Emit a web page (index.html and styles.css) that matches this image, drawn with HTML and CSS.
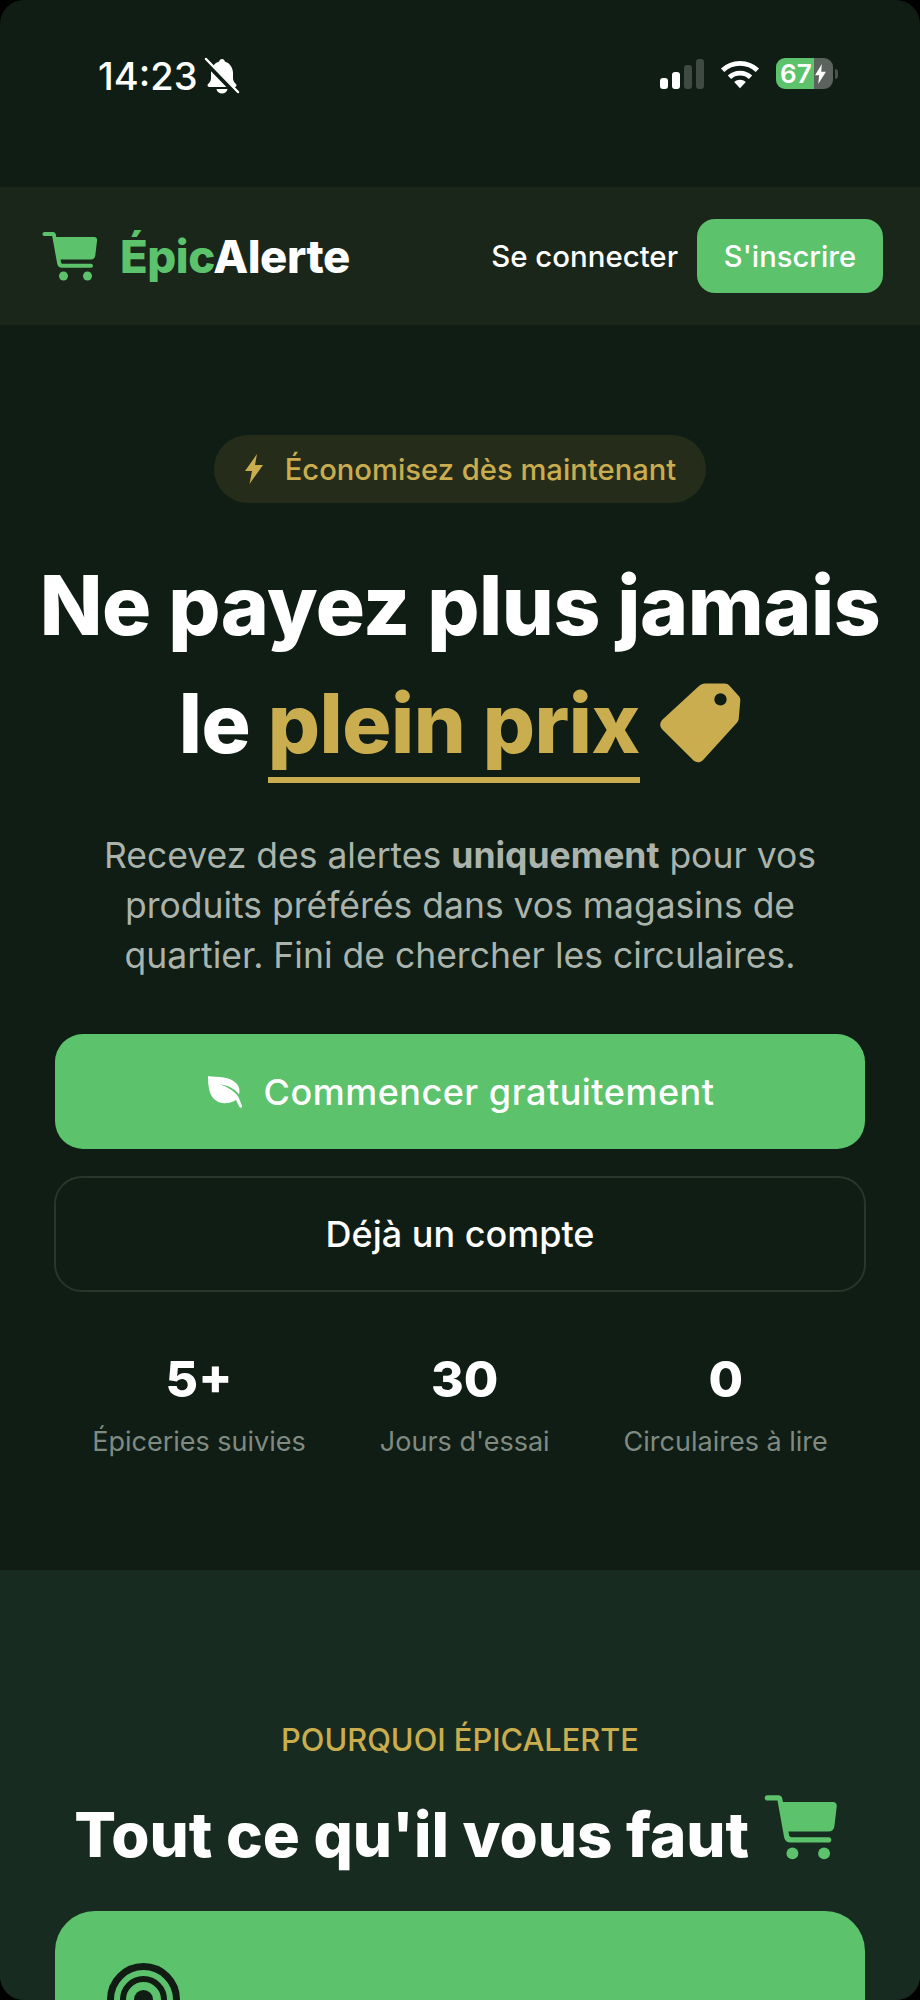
FILE: index.html
```html
<!DOCTYPE html>
<html lang="fr">

<head>
    <meta charset="UTF-8">
    <meta name="viewport" content="width=device-width, initial-scale=1.0">
    <title>ÉpicAlerte</title>
    <link rel="stylesheet" href="styles.css">
</head>

<body>
    <div class="screen">
        <!-- Status bar -->
        <div class="status-bar">
            <div class="status-left">
                <span class="status-time">14:23</span>
                <svg class="bell-icon" viewBox="0 0 36 36">
                    <path fill="#fff" d="M18 1c-1.600 0-2.600 1-2.800 2.400C10.600 4.700 7 9.500 7 15v5c0 2.500-1 4.200-3 6-1 1-.5 3 1.500 3h25c2 0 2.500-2 1.500-3-2-1.800-3-3.500-3-6v-5c0-5.500-3.600-10.300-8.200-11.600C20.600 2 19.600 1 18 1z"/>
                    <path fill="#fff" d="M12.500 31h11c-.4 2.800-2.800 4.500-5.500 4.500s-5.100-1.700-5.500-4.500z"/>
                    <path stroke="#0f1d14" stroke-width="5.500" d="M1 3l32 33"/>
                    <path stroke="#fff" stroke-width="2.500" stroke-linecap="round" d="M2 1l32 33"/>
                </svg>
            </div>
            <div class="status-right">
                <div class="signal">
                    <span class="signal-bar signal-on bar-1"></span>
                    <span class="signal-bar signal-on bar-2"></span>
                    <span class="signal-bar bar-3"></span>
                    <span class="signal-bar bar-4"></span>
                </div>
                <svg class="wifi-icon" viewBox="0 0 38 28">
                    <path fill="none" stroke="#fff" stroke-width="4.600" d="M2.500 10.500C11.500 1.700 26.500 1.700 35.500 10.500"/>
                    <path fill="none" stroke="#fff" stroke-width="4.600" d="M9 17c5.500-5.200 14.500-5.200 20 0"/>
                    <path fill="#fff" d="M13.500 21.500c3.200-2.800 7.800-2.800 11 0L19 27.500z"/>
                </svg>
                <div class="battery">
                    <div class="battery-body">
                        <span class="battery-level">67</span>
                        <svg class="battery-bolt" viewBox="0 0 12 22">
                            <path fill="#fff" d="M7.500 0L0 12.500h4.500L3.500 22 12 8.500H6.800z"/>
                        </svg>
                    </div>
                    <span class="battery-tip"></span>
                </div>
            </div>
        </div>

        <!-- Nav -->
        <nav class="nav">
            <a class="logo">
                <svg class="cart-icon" viewBox="0 0 56 50">
                    <use href="#cart"/>
                </svg>
                <span class="logo-text"><span class="logo-green">Épic</span>Alerte</span>
            </a>
            <div class="nav-links">
                <a class="nav-login">Se connecter</a>
                <a class="nav-signup">S'inscrire</a>
            </div>
        </nav>

        <!-- Hero -->
        <section class="hero">
            <div class="hero-badge">
                <svg class="badge-bolt" viewBox="0 0 20 30">
                    <path fill="#c9ad4f" d="M13 0L1 17h7L5.500 30 19 11h-8z"/>
                </svg>
                <span>Économisez dès maintenant</span>
            </div>

            <h1 class="hero-title">
                Ne payez plus jamais<br>
                le <span class="title-accent">plein prix</span>
                <svg class="tag-icon" viewBox="0 0 80 80">
                    <path fill="#c9ad4f" fill-rule="evenodd" d="M45 1.500h19c2 0 3.500.8 4.800 2.200l9 10c1.200 1.400 1.700 3 1.500 4.800l-1.500 17c-.2 1.800-.8 3-2 4.400L43 76c-2.800 3-7 3-9.800.2L3.500 46.500c-3-3-3-7 0-10L39 4c1.800-1.700 3.700-2.500 6-2.500zM54 17a6 6 0 1 0 12 0 6 6 0 1 0-12 0z"/>
                </svg>
            </h1>

            <p class="hero-text">
                Recevez des alertes <strong>uniquement</strong> pour vos produits préférés dans vos magasins de quartier. Fini de chercher les circulaires.
            </p>

            <div class="hero-actions">
                <a class="btn btn-primary">
                    <svg class="leaf-icon" viewBox="0 0 38 34">
                        <path fill="#fff" d="M2 1c10 1.500 22 0 29 8 2.500 3 3 7 2 10.500-5-7-13-9.500-19-10 6 2 14 5.500 18.500 12.500l3.500 9c.5 1.500-1.500 2.500-2.500 1L30 25C22 30 13 29 8 24 3 19 2 10 2 1z"/>
                    </svg>
                    Commencer gratuitement
                </a>
                <a class="btn btn-outline">Déjà un compte</a>
            </div>

            <div class="stats">
                <div class="stat">
                    <div class="stat-value">5+</div>
                    <div class="stat-label">Épiceries suivies</div>
                </div>
                <div class="stat">
                    <div class="stat-value">30</div>
                    <div class="stat-label">Jours d'essai</div>
                </div>
                <div class="stat">
                    <div class="stat-value">0</div>
                    <div class="stat-label">Circulaires à lire</div>
                </div>
            </div>
        </section>

        <!-- Features -->
        <section class="features">
            <div class="features-eyebrow">POURQUOI ÉPICALERTE</div>
            <h2 class="features-title">
                Tout ce qu'il vous faut
                <svg class="title-cart" viewBox="0 0 56 50">
                    <use href="#cart"/>
                </svg>
            </h2>
            <div class="feature-card">
                <svg class="target-icon" viewBox="0 0 73 73">
                    <circle cx="36.500" cy="36.500" r="33" fill="none" stroke="#101c14" stroke-width="7"/>
                    <circle cx="36.500" cy="36.500" r="20.500" fill="none" stroke="#101c14" stroke-width="6"/>
                    <circle cx="36.500" cy="36.500" r="9.500" fill="#101c14"/>
                </svg>
            </div>
        </section>
    </div>

    <svg class="sprites" width="0" height="0">
        <symbol id="cart" viewBox="0 0 56 50">
            <path fill="#5cc26c" d="M2.500 1h8.500c1.500 0 2.500 1 2.800 2.300l.5 2.700h38c1.800 0 3 1.500 2.800 3.200l-1.800 15.300c-.3 2.500-2 4-4.500 4H18.500l.5 2.800c.2 1 1 1.500 2 1.500h28c1.200 0 2 1 2 2s-.8 2-2 2H20c-2.500 0-4.300-1.500-4.800-4L10.200 5H2.500C1.200 5 .5 4 .5 3s.7-2 2-2z"/>
            <circle cx="21.500" cy="45" r="4.500" fill="#5cc26c"/>
            <circle cx="45.500" cy="45" r="4.500" fill="#5cc26c"/>
        </symbol>
    </svg>
</body>

</html>
```

FILE: styles.css
```css
* {
    box-sizing: border-box;
}

body {
    margin: 0;
    background-color: #000;
    font-family: "Inter", "Noto Sans", sans-serif;
    color: #fff;
}

.sprites {
    display: block;
}

.screen {
    height: 2000px;
    overflow: hidden;
    background-color: #0f1d14;
    border-radius: 24px;
}

.status-bar {
    height: 187px;
    padding: 54px 82px 0 98px;
    display: flex;
    justify-content: space-between;
    align-items: flex-start;
}

.status-left,
.status-right {
    display: flex;
    align-items: center;
}

.status-right {
    margin-top: 4px;
}

.status-time {
    font-size: 38px;
    font-weight: 500;
    line-height: 44px;
}

.bell-icon {
    width: 36px;
    height: 38px;
    margin-left: 7px;
}

.signal {
    display: flex;
    align-items: flex-end;
    gap: 4px;
    height: 30px;
    margin-right: 16px;
}

.signal-bar {
    width: 8px;
    border-radius: 3px;
    background-color: #3f4a43;
}

.signal-on {
    background-color: #fff;
}

.bar-1 { height: 11px; }
.bar-2 { height: 17px; }
.bar-3 { height: 24px; }
.bar-4 { height: 30px; }

.wifi-icon {
    width: 40px;
    height: 30px;
    margin-right: 16px;
}

.battery {
    display: flex;
    align-items: center;
    gap: 2px;
}

.battery-body {
    display: flex;
    align-items: center;
    width: 57px;
    height: 31px;
    padding-left: 4px;
    border-radius: 9px;
    background: linear-gradient(90deg, #5cc26c 67%, #5c635e 67%);
}

.battery-level {
    font-size: 26px;
    font-weight: 600;
    line-height: 31px;
    width: 35px;
}

.battery-bolt {
    width: 11px;
    height: 20px;
}

.battery-tip {
    width: 3px;
    height: 10px;
    border-radius: 0 3px 3px 0;
    background-color: #4a524d;
}

.nav {
    height: 138px;
    padding: 0 37px 0 42px;
    display: flex;
    justify-content: space-between;
    align-items: center;
    background-color: #1a261a;
}

.logo {
    display: flex;
    align-items: center;
    gap: 22px;
}

.cart-icon {
    width: 56px;
    height: 50px;
}

.logo-text {
    font-size: 45.500px;
    font-weight: 800;
    letter-spacing: -0.5px;
}

.logo-green {
    color: #5cc26c;
}

.nav-links {
    display: flex;
    align-items: center;
    gap: 19px;
}

.nav-login {
    font-size: 29.400px;
    font-weight: 500;
}

.nav-signup {
    width: 186px;
    height: 74px;
    display: flex;
    align-items: center;
    justify-content: center;
    font-size: 29.200px;
    font-weight: 500;
    background-color: #5cc26c;
    border-radius: 18px;
}

.hero {
    height: 1245px;
    padding: 110px 55px 0;
    text-align: center;
}

.hero-badge {
    display: inline-flex;
    align-items: center;
    gap: 21px;
    height: 68px;
    padding: 0 30px;
    border-radius: 34px;
    background-color: #262c1a;
    color: #c9ad4f;
    font-size: 29.200px;
    font-weight: 500;
}

.badge-bolt {
    width: 20px;
    height: 30px;
}

.hero-title {
    margin: 44px -20px 0;
    font-size: 82px;
    line-height: 118px;
    font-weight: 800;
    letter-spacing: -0.5px;
}

.title-accent {
    color: #c9ad4f;
    border-bottom: 6px solid #c9ad4f;
    padding-bottom: 4px;
}

.tag-icon {
    width: 82px;
    height: 82px;
    margin-left: 2px;
    vertical-align: -11px;
}

.hero-text {
    margin: 48px 30px 0;
    font-size: 35.500px;
    line-height: 50px;
    font-weight: 400;
    color: #aab3ac;
}

.hero-text strong {
    font-weight: 700;
}

.hero-actions {
    margin-top: 53px;
    display: flex;
    flex-direction: column;
    gap: 27px;
}

.btn {
    height: 115px;
    display: flex;
    align-items: center;
    justify-content: center;
    gap: 20px;
    font-size: 36px;
    font-weight: 500;
    border-radius: 28px;
}

.btn-primary {
    background-color: #5cc26c;
    letter-spacing: 0.5px;
}

.btn-outline {
    height: 116px;
    margin: 0 -1px;
    border: 2px solid #2a352c;
}

.leaf-icon {
    width: 38px;
    height: 34px;
}

.stats {
    margin-top: 57px;
    display: flex;
    justify-content: center;
    gap: 74px;
}

.stat-value {
    font-size: 50px;
    line-height: 60px;
    font-weight: 800;
}

.stat-label {
    margin-top: 15px;
    font-size: 27px;
    line-height: 36px;
    color: #7f8a82;
}

.features {
    height: 430px;
    padding: 150px 55px 0;
    text-align: center;
    background-color: #182b20;
}

.features-eyebrow {
    font-size: 30.800px;
    line-height: 40px;
    font-weight: 500;
    color: #c9ad4f;
}

.features-title {
    margin: 30px -16px 0 -24px;
    font-size: 61.800px;
    line-height: 90px;
    font-weight: 800;
}

.title-cart {
    width: 74px;
    height: 66px;
    margin-left: 1px;
    vertical-align: -3px;
}

.feature-card {
    margin-top: 31px;
    height: 200px;
    padding: 52px;
    text-align: left;
    background-color: #5cc26c;
    border-radius: 40px;
}

.target-icon {
    display: block;
    width: 73px;
    height: 73px;
}
```
